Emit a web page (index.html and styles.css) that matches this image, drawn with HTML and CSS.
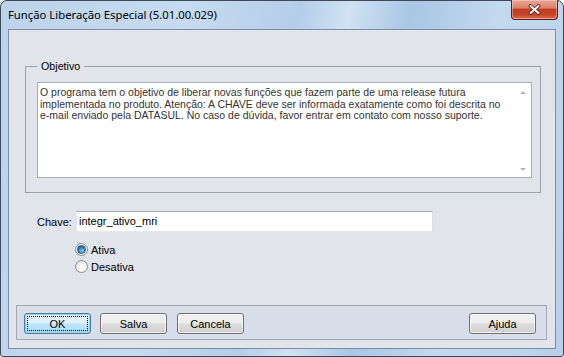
FILE: index.html
```html
<!DOCTYPE html>
<html lang="pt-BR">
<head>
  <meta charset="UTF-8">
  <title>Função Liberação Especial</title>
  <link rel="stylesheet" href="styles.css">
</head>
<body>
<div class="window">
  <div class="titlebar">
    <span class="title">Função Liberação Especial (5.01.00.029)</span>
    <button class="close">
      <svg width="13" height="11" viewBox="0 0 13 11">
        <path d="M2.5 2 L10.5 9 M10.5 2 L2.5 9" stroke="#4a1e16" stroke-width="3.6" stroke-linecap="round"/>
        <path d="M2.5 2 L10.5 9 M10.5 2 L2.5 9" stroke="#fff" stroke-width="2" stroke-linecap="round"/>
      </svg>
    </button>
  </div>

  <div class="client">
    <!-- grupo objetivo -->
    <fieldset class="group">
      <legend>Objetivo</legend>
      <div class="memo">
        <div class="memo-text">O programa tem o objetivo de liberar novas funções que fazem parte de uma release futura<br>implementada no produto. Atenção: A CHAVE deve ser informada exatamente como foi descrita no<br>e-mail enviado pela DATASUL. No caso de dúvida, favor entrar em contato com nosso suporte.</div>
        <div class="memo-scroll">
          <span class="arrow up"></span>
          <span class="arrow down"></span>
        </div>
      </div>
    </fieldset>

    <div class="field">
      <label class="field-label">Chave:</label>
      <div class="input">integr_ativo_mri</div>
    </div>

    <div class="radios">
      <label class="radio"><span class="dot checked"></span>Ativa</label>
      <label class="radio"><span class="dot"></span>Desativa</label>
    </div>

    <!-- barra de botoes -->
    <div class="buttonbar">
      <button class="btn default"><span class="focus">OK</span></button>
      <button class="btn">Salva</button>
      <button class="btn">Cancela</button>
      <button class="btn help">Ajuda</button>
    </div>
  </div>
</div>
</body>
</html>
```

FILE: styles.css
```css
*{
  margin: 0;
  padding: 0;
  box-sizing: border-box;
}
body{
  width: 564px;
  height: 357px;
  background: #fff;
  font-family: "Liberation Sans", Arial, sans-serif;
  font-size: 11px;
  color: #000;
}
.window{
  width: 564px;
  height: 357px;
  border: 1px solid #3d4a5a;
  border-radius: 7px 7px 3px 3px;
  padding: 0 7px 7px 7px;
  display: flex;
  flex-direction: column;
  background:
    linear-gradient(100deg, #bcd3ec 0%, #c6dbf0 30%, #b4cde9 48%, #d0e2f3 56%, #a9c6e5 66%, #c3d9ef 80%, #b7d0ea 100%);
}
.titlebar{
  height: 28px;
  display: flex;
  align-items: flex-start;
}
.title{
  font-family: "Noto Sans", "Open Sans", sans-serif;
  font-size: 11.3px;
  line-height: 16px;
  padding-top: 6px;
  color: #000;
}
.close{
  margin-left: auto;
  margin-top: -1px;
  margin-right: -2px;
  width: 47px;
  height: 20px;
  border: 1px solid #5e2119;
  border-top: none;
  border-radius: 0 0 4px 4px;
  background: linear-gradient(#e9a898 0%, #dc8067 42%, #c43c20 50%, #c44527 78%, #dc7250 100%);
  display: flex;
  align-items: center;
  justify-content: center;
  box-shadow: inset 0 0 0 1px rgba(255,220,210,0.45);
}
.client{
  flex: 1;
  border: 1px solid #7d8ea3;
  background: #e1e4eb;
  display: flex;
  flex-direction: column;
}
.group{
  margin: 30px 14px 0 16px;
  border: 1px solid #9ba1ab;
  padding: 9px 8px 14px 11px;
}
.group legend{
  padding: 0 4px;
  line-height: 13px;
  font-size: 10.7px;
}
.memo{
  height: 96px;
  background: #fff;
  border: 1px solid #a9acb2;
  display: flex;
}
.memo-text{
  flex: 1;
  padding: 4px 2px;
  font-size: 10.5px;
  line-height: 11.5px;
  white-space: nowrap;
  color: #333;
}
.memo-scroll{
  width: 16px;
  display: flex;
  flex-direction: column;
  justify-content: space-between;
  align-items: center;
  padding: 8px 0 6px;
}
.arrow{
  width: 0;
  height: 0;
  border-left: 3px solid transparent;
  border-right: 3px solid transparent;
}
.arrow.up{
  border-bottom: 3px solid #b4b6b9;
}
.arrow.down{
  border-top: 3px solid #b4b6b9;
}
.field{
  margin: 18px 0 0 28px;
  display: flex;
  align-items: center;
}
.field-label{
  width: 39px;
}
.input{
  width: 357px;
  height: 21px;
  background: #fff;
  border: 1px solid #e3e9ef;
  border-top-color: #abadb3;
  border-left-color: #e2e3ea;
  border-right-color: #dbdfe6;
  padding: 0 2px;
  line-height: 19px;
}
.radios{
  margin: 9px 0 0 66px;
  display: flex;
  flex-direction: column;
}
.radio{
  height: 17px;
  display: flex;
  align-items: center;
  gap: 3px;
}
.dot{
  width: 13px;
  height: 13px;
  border-radius: 50%;
  border: 1px solid #8b8e93;
  background: radial-gradient(circle at 60% 65%, #ffffff 0%, #f2f2f2 45%, #d8d8d8 100%);
  display: flex;
  align-items: center;
  justify-content: center;
}
.dot.checked::after{
  content: "";
  width: 7px;
  height: 7px;
  border-radius: 50%;
  border: 1px solid #24597f;
  background: radial-gradient(circle at 60% 70%, #8ed0f2 0%, #3d88bd 45%, #1e4f79 100%);
}
.buttonbar{
  margin: auto 8px 8px 7px;
  border: 1px solid #a3a8b3;
  background: #d8dde9;
  padding: 7px 10px 5px 7px;
  display: flex;
  gap: 9px;
}
.btn{
  width: 67px;
  height: 21px;
  border: 1px solid #707070;
  border-radius: 3px;
  background: linear-gradient(#f2f2f2 0%, #ebebeb 48%, #dddddd 52%, #cfcfcf 100%);
  font-family: "Liberation Sans", Arial, sans-serif;
  font-size: 11px;
  color: #000;
  display: flex;
  align-items: center;
  justify-content: center;
  box-shadow: inset 0 0 0 1px rgba(255,255,255,0.7);
}
.btn:nth-child(3){
  margin-left: 1px;
}
.btn.default{
  border-color: #3c7fb1;
  background: linear-gradient(#eaf6fd 0%, #d9f0fc 48%, #bee6fd 52%, #a7d9f5 100%);
  box-shadow: inset 0 0 0 1px #9ccfec;
  padding: 2px;
}
.btn.default .focus{
  width: 100%;
  height: 100%;
  border: 1px dotted #000;
  display: flex;
  align-items: center;
  justify-content: center;
}
.btn.help{
  margin-left: auto;
}
```
